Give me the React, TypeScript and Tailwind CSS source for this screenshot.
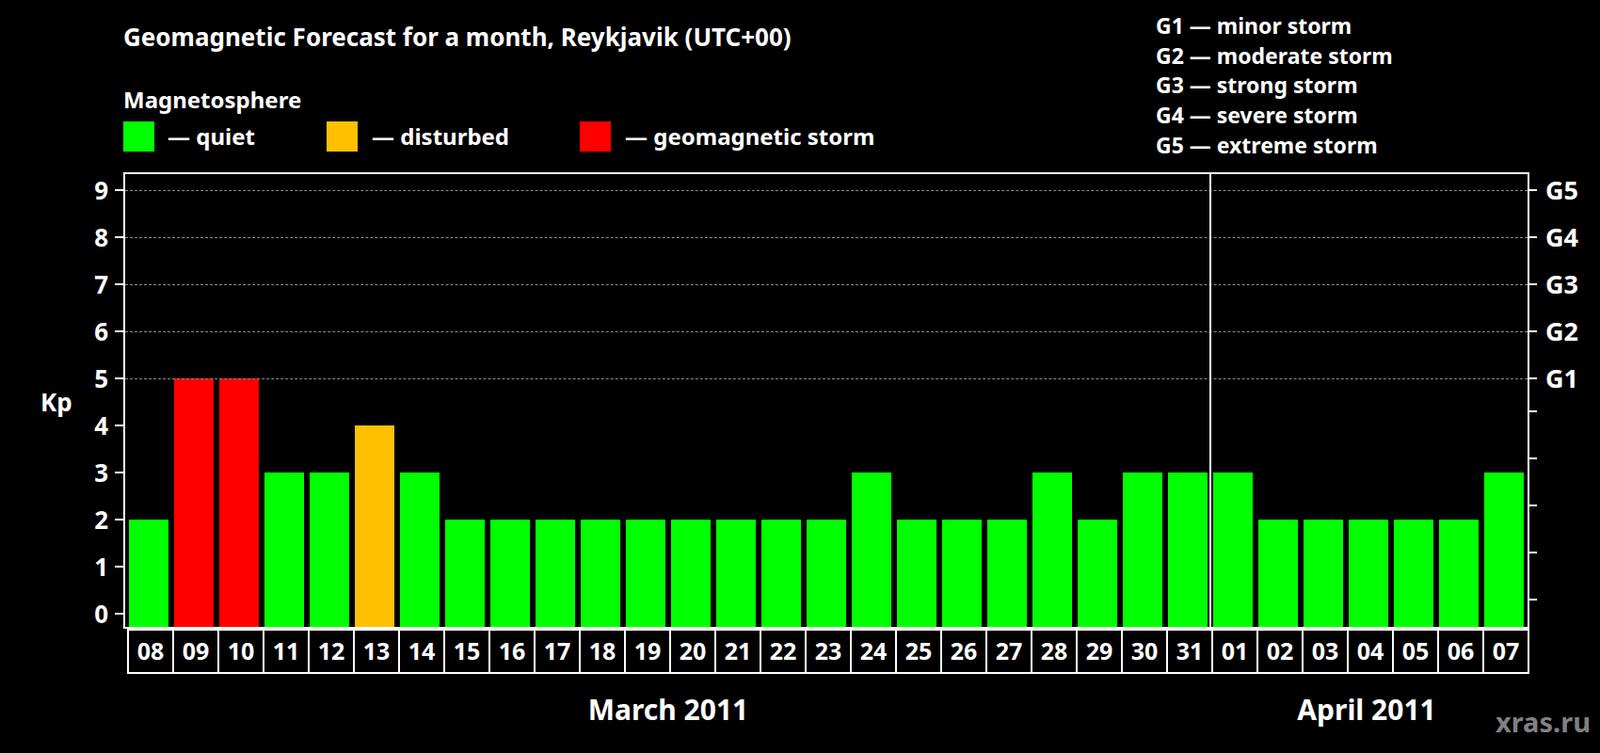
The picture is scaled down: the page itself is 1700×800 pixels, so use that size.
const days = ["08","09","10","11","12","13","14","15","16","17","18","19","20","21","22","23","24","25","26","27","28","29","30","31","01","02","03","04","05","06","07"];
const kp = [2,5,5,3,3,4,3,2,2,2,2,2,2,2,2,2,3,2,2,2,3,2,3,3,3,2,2,2,2,2,3];

const barColor = (v: number) =>
  v >= 5 ? "bg-[#ff0000]" : v === 4 ? "bg-[#ffc000]" : "bg-[#00ff00]";

const gLevels = ["G1 — minor storm", "G2 — moderate storm", "G3 — strong storm", "G4 — severe storm", "G5 — extreme storm"];
const levels = [0,1,2,3,4,5,6,7,8,9];

// y of a Kp value, measured from the top of the frame's inner box
const yOf = (v: number) => 467 - v * 50;

export default function App() {
  return (
    <div className="relative w-[1700px] h-[800px] overflow-hidden bg-black text-white font-bold font-['Liberation_Sans',Arial,sans-serif]">
      {/* header */}
      <div className="flex h-[183px]">
        <div className="w-[1228px] pl-[131px]">
          <div className="pt-[24px] text-[26px] leading-[30px]">Geomagnetic Forecast for a month, Reykjavik (UTC+00)</div>
          <div className="pt-[38px] text-[24px] leading-[28px]">Magnetosphere</div>
          <div className="mt-[7px] flex items-center text-[24px]">
            <span className="w-[33px] h-[32px] bg-[#00ff00]" />
            <span className="ml-[14px] w-[169px]">— quiet</span>
            <span className="w-[33px] h-[32px] bg-[#ffc000]" />
            <span className="ml-[15px] w-[221px]">— disturbed</span>
            <span className="w-[33px] h-[32px] bg-[#ff0000]" />
            <span className="ml-[15px]">— geomagnetic storm</span>
          </div>
        </div>
        <div className="pt-[12px] text-[23px] leading-[31.7px]">
          {gLevels.map((g) => (
            <div key={g}>{g}</div>
          ))}
        </div>
      </div>

      {/* chart */}
      <div className="flex">
        <div className="relative w-[131px] h-[485px]">
          {levels.map((v) => (
            <div key={v} className="absolute right-0 flex items-center" style={{ top: yOf(v) + 2 - 15 }}>
              <span className="w-[16px] text-[26px] leading-[30px] text-right">{v}</span>
              <span className="ml-[7px] w-[9px] h-[2px] bg-white" />
            </div>
          ))}
          <div className="absolute left-[43px] top-[229px] text-[26px] leading-[30px]">Kp</div>
        </div>

        <div className="relative w-[1494px] h-[485px] border-2 border-white">
          {levels.filter((v) => v >= 5).map((v) => (
            <div key={v} className="absolute left-0 right-0 border-t border-dashed border-[#8c8c8c]" style={{ top: yOf(v) }} />
          ))}
          <div className="absolute top-0 bottom-0 left-[1152px] w-[2px] bg-white" />
          <div className="flex items-end h-full pl-[1px]">
            {kp.map((v, i) => (
              <div key={i} className="w-[48px] flex">
                <div className={`ml-[3px] w-[42px] ${barColor(v)}`} style={{ height: 14 + v * 50 }} />
              </div>
            ))}
          </div>
        </div>

        <div className="relative w-[75px] h-[485px]">
          {levels.map((v) => (
            <div key={v} className="absolute left-0 flex items-center" style={{ top: yOf(v) + 2 - 16 }}>
              <span className="w-[8px] h-[2px] bg-white" />
              {v >= 5 && <span className="ml-[9px] text-[27px] leading-[32px]">G{v - 4}</span>}
            </div>
          ))}
        </div>
      </div>

      {/* day labels */}
      <div className="ml-[135px] flex w-[1490px] h-[48px] border-y-2 border-r-2 border-white">
        {days.map((d, i) => (
          <div key={i} className="w-[48px] border-l-2 border-white flex items-center justify-center text-[25px]">
            {d}
          </div>
        ))}
      </div>

      {/* months */}
      <div className="flex mt-[21px] text-[30px] leading-[34px]">
        <div className="ml-[560px] w-[300px] text-center">March 2011</div>
        <div className="ml-[442px] w-[300px] text-center">April 2011</div>
      </div>

      <div className="absolute right-[10px] bottom-[12px] text-[29px] text-[#808080]">xras.ru</div>
    </div>
  );
}
